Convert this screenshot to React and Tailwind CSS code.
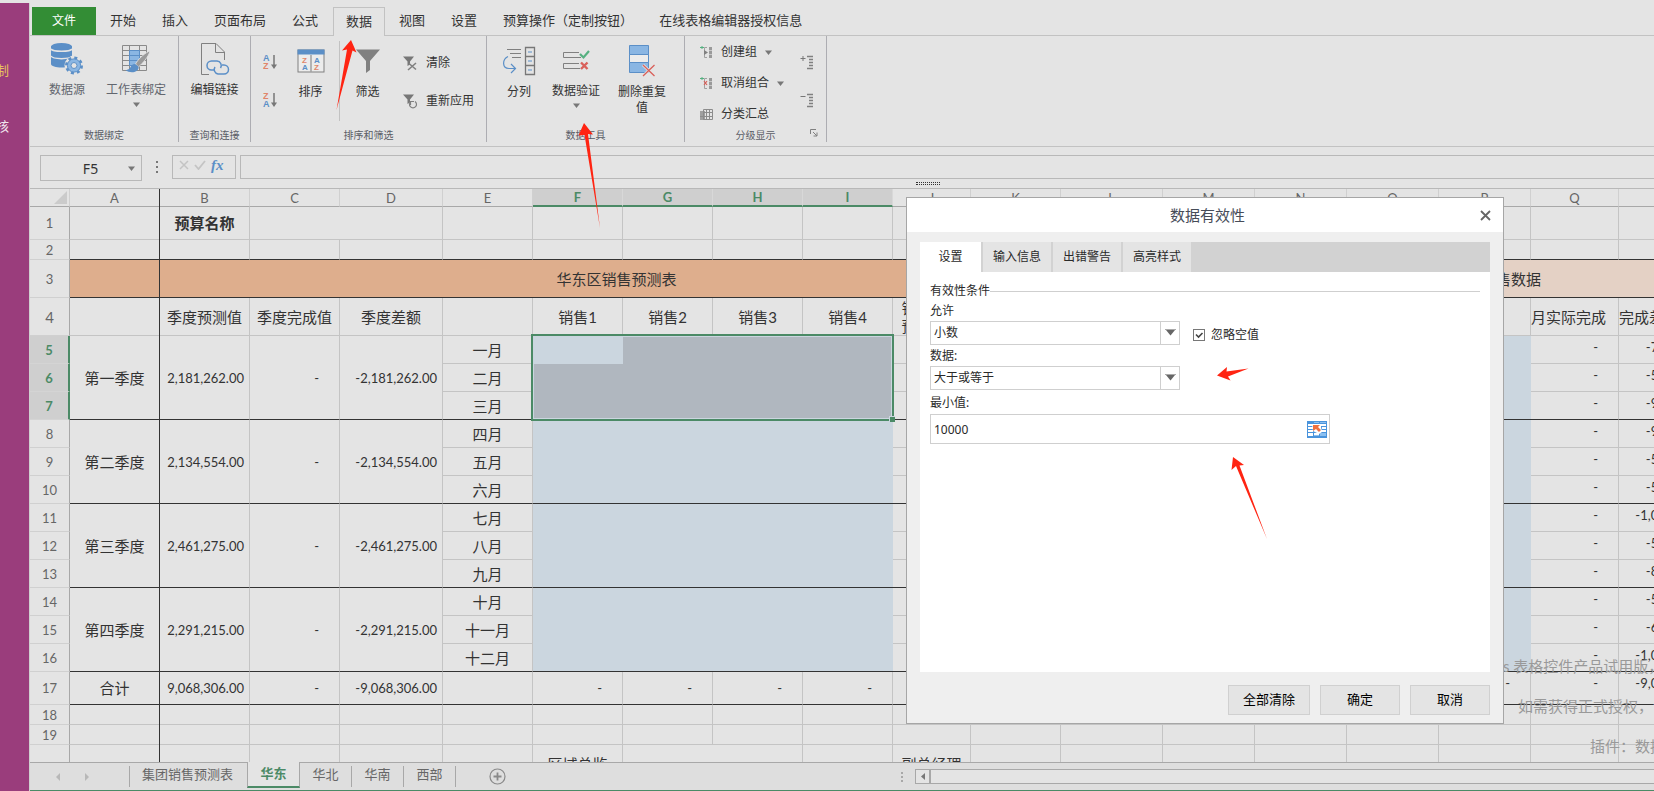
/**
 * Online spreadsheet editor: ribbon, formula bar, sheet grid and sheet tabs,
 * with the data validation dialog open above the grid.
 */
const FONT = "font-['Lato','Noto_Sans_CJK_SC',sans-serif]"
const FONT_UI = "font-['Noto_Sans','Noto_Sans_CJK_SC',sans-serif]"

const MENU = ['开始', '插入', '页面布局', '公式', '数据', '视图', '设置', '预算操作（定制按钮）', '在线表格编辑器授权信息']

const COLUMNS = [
  ['A', 90], ['B', 90], ['C', 90], ['D', 103], ['E', 90], ['F', 90], ['G', 90], ['H', 90], ['I', 90],
  ['J', 78], ['K', 90], ['L', 102], ['M', 92], ['N', 92], ['O', 92], ['P', 92], ['Q', 88], ['R', 107], ['S', 88],
]

const QUARTERS = [
  { name: '第一季度', total: '2,181,262.00', months: ['一月', '二月', '三月'], gaps: ['-711,262.00', '-540,000.00', '-930,000.00'] },
  { name: '第二季度', total: '2,134,554.00', months: ['四月', '五月', '六月'], gaps: ['-984,554.00', '-580,000.00', '-570,000.00'] },
  { name: '第三季度', total: '2,461,275.00', months: ['七月', '八月', '九月'], gaps: ['-1,021,275.00', '-560,000.00', '-880,000.00'] },
  { name: '第四季度', total: '2,291,215.00', months: ['十月', '十一月', '十二月'], gaps: ['-590,000.00', '-630,000.00', '-1,071,215.00'] },
]

const SHEETS = ['集团销售预测表', '华东', '华北', '华南', '西部']

const Caret = ({ className = '' }) => (
  <svg width="7" height="5" viewBox="0 0 7 5" className={className} aria-hidden="true">
    <path d="M0 0.500h7L3.500 5z" fill="#777" />
  </svg>
)

/* ---------- ribbon icons ---------- */

const DataSourceIcon = () => (
  <svg width="34" height="34" viewBox="0 0 34 34" aria-hidden="true">
    <path d="M1 4v18c0 2 5 3.500 10.500 3.500S22 24 22 22V4z" fill="#5b8fc7" />
    <ellipse cx="11.500" cy="4.500" rx="10.500" ry="3.500" fill="#5b8fc7" />
    <path d="M1 7c2 3 19 3 21 0M1 14c2 3.500 19 3.500 21 0" fill="none" stroke="#e4e4e4" strokeWidth="1.500" />
    <circle cx="24" cy="23.500" r="9.500" fill="#e4e4e4" />
    <circle cx="24" cy="23.500" r="7.500" fill="none" stroke="#5b8fc7" strokeWidth="3" strokeDasharray="2.900 3" />
    <circle cx="24" cy="23.500" r="4.800" fill="#e4e4e4" stroke="#8ab6e3" strokeWidth="3.600" />
    <circle cx="24" cy="23.500" r="6.600" fill="none" stroke="#5b8fc7" />
    <circle cx="24" cy="23.500" r="3" fill="#e4e4e4" stroke="#5b8fc7" />
  </svg>
)

const SheetBindIcon = () => (
  <svg width="30" height="32" viewBox="0 0 30 32" aria-hidden="true">
    <path d="M1.500 2.500h24v25h-24zM1.500 7.500h24M1.500 12.500h24M1.500 17.500h24M1.500 22.500h24M8.500 2.500v25M18.500 2.500v25" fill="none" stroke="#8a8a8a" />
    <path d="M8.500 7.500h10v15h-10z" fill="#8ab6e3" stroke="#5b8fc7" />
    <path d="M8.500 12.500h10M8.500 17.500h10" stroke="#5b8fc7" />
    <path d="M29 8c-4 1-12 8-14.500 13l3 3C22 20 28 13 29 8z" fill="#9a9a9a" stroke="#e4e4e4" strokeWidth="0.800" />
    <path d="M14 21c-3 0-4 2-5 4-1 1.500-3 2-4.500 2 3 2.500 8 3 11 1 2-1.500 2.500-3 2-4.500z" fill="#5b8fc7" />
  </svg>
)

const EditLinkIcon = () => (
  <svg width="30" height="34" viewBox="0 0 30 34" aria-hidden="true">
    <path d="M9 32.500H1.500v-31H16l8.500 8.500v8M15.500 1.500v9h9" fill="none" stroke="#808080" />
    <path d="M15 28h-3.500a4.500 4.500 0 0 1 0-9H17a4.500 4.500 0 0 1 3.500 7" fill="none" stroke="#5b8fc7" strokeWidth="1.500" />
    <path d="M22 23h2a4.500 4.500 0 0 1 0 9h-6a4.500 4.500 0 0 1-3-7" fill="none" stroke="#5b8fc7" strokeWidth="1.500" />
  </svg>
)

const SortIcon = ({ desc = false }) => (
  <svg width="16" height="16" viewBox="0 0 16 16" aria-hidden="true" className="font-['Liberation_Sans',sans-serif] text-[9px] font-bold">
    <text x="0" y="7" fill={desc ? '#e0856a' : '#5b8fc7'}>{desc ? 'Z' : 'A'}</text>
    <text x="0" y="15" fill={desc ? '#5b8fc7' : '#e0856a'}>{desc ? 'A' : 'Z'}</text>
    <path d="M11 1v11" stroke="#777" strokeWidth="1.500" />
    <path d="M8 10.500h6L11 15z" fill="#777" />
  </svg>
)

const CustomSortIcon = () => (
  <svg width="28" height="24" viewBox="0 0 28 24" aria-hidden="true" className="font-['Liberation_Sans',sans-serif] text-[8px] font-bold">
    <rect x="1" y="1" width="26" height="22" fill="#ececec" stroke="#808080" />
    <rect x="0.500" y="0.500" width="27" height="5" fill="#5b8fc7" />
    <path d="M14 6v17" stroke="#a0a0a0" strokeWidth="1.500" />
    <text x="5" y="14" fill="#e0856a">Z</text>
    <text x="5" y="21" fill="#5b8fc7">A</text>
    <text x="17" y="14" fill="#5b8fc7">A</text>
    <text x="17" y="21" fill="#e0856a">Z</text>
  </svg>
)

const FilterIcon = () => (
  <svg width="24" height="24" viewBox="0 0 24 24" aria-hidden="true">
    <path d="M0 0.500h24L14 12v9l-4 3V12z" fill="#808080" />
  </svg>
)

const SmallFilterIcon = ({ clear = false }) => (
  <svg width="15" height="15" viewBox="0 0 15 15" aria-hidden="true">
    <path d="M0 0.500h11L7 5.500v3L4.500 10V5.500z" fill="#777" />
    {clear
      ? <path d="M5 14l8-7M6 7.500l7 6" stroke="#808080" strokeWidth="1.600" />
      : <path d="M8 7.500a3.500 3.500 0 1 0 4 0M7.500 11V7.500H11" fill="none" stroke="#808080" strokeWidth="1.200" />}
  </svg>
)

const SplitIcon = () => (
  <svg width="34" height="30" viewBox="0 0 34 30" aria-hidden="true">
    <path d="M5 3.500h14M8 7.500h11M10 11.500h9" stroke="#808080" />
    <path d="M6 10.500c-6 3-6 12 1 12h6M9 18l4.500 4.500L9 27" fill="none" stroke="#5b8fc7" strokeWidth="1.200" />
    <path d="M23.500 1.500h9v27h-9zM23.500 10.500h9M23.500 19.500h9" fill="none" stroke="#777" strokeWidth="1.300" />
    <path d="M26 6h4M26 15h4M26 24h4" stroke="#5b8fc7" strokeWidth="1.200" />
  </svg>
)

const ValidationIcon = () => (
  <svg width="28" height="22" viewBox="0 0 28 22" aria-hidden="true">
    <path d="M17 3.500H1.500v5H19M17 14.500H1.500v5H18" fill="none" stroke="#808080" />
    <path d="M18 5l3.500 3.500L27 2" fill="none" stroke="#55b080" strokeWidth="2.200" />
    <path d="M19 13.500l6.500 6.500M25.500 13.500L19 20" stroke="#d9605a" strokeWidth="2.400" />
  </svg>
)

const DuplicatesIcon = () => (
  <svg width="28" height="34" viewBox="0 0 28 34" aria-hidden="true">
    <path d="M1.500 1.500h19v27h-19z" fill="#8ab6e3" stroke="#5b8fc7" />
    <path d="M1.500 10.500h19v8h-19z" fill="#ececec" stroke="#5b8fc7" />
    <path d="M15 21l11.500 11M26.500 21L15 32" stroke="#e4e4e4" strokeWidth="3" />
    <path d="M15 21l11.500 11M26.500 21L15 32" stroke="#d9605a" strokeWidth="1.300" />
  </svg>
)

const GroupIcon = ({ remove = false }) => (
  <svg width="13" height="13" viewBox="0 0 13 13" aria-hidden="true">
    <path d="M0 1.500h4M2 0v3" stroke="#55b080" />
    <path d="M7 1.500H4.500v10H7" fill="none" stroke="#a0a0a0" />
    <rect x="9" y="1" width="3" height="11" fill="#9a9a9a" />
    <path d="M9 4.500h3M9 8.500h3" stroke="#c8c8c8" />
    {remove
      ? <path d="M4 4l3 4M7 4L4 8" stroke="#d9605a" strokeWidth="1.200" />
      : <path d="M4 4l4 2.500L4 9z" fill="#808080" />}
  </svg>
)

const SubtotalIcon = () => (
  <svg width="13" height="13" viewBox="0 0 13 13" aria-hidden="true">
    <rect x="0" y="3" width="5" height="9" fill="#a0a0a0" />
    <path d="M3.500 1.500h9v10h-9zM3.500 4.500h9M0 8.500h12M6.500 1v11M9.500 1v11" fill="none" stroke="#8c8c8c" />
  </svg>
)

const DetailIcon = ({ hide = false }) => (
  <svg width="15" height="15" viewBox="0 0 15 15" aria-hidden="true">
    <path d={hide ? 'M0.500 3.500h5' : 'M0.500 3.500h5M3 1v5'} stroke="#777" />
    <path d="M7 1.500h6M9 4.500h4M9 7.500h4M9 10.500h4M7 13.500h6" stroke="#808080" strokeWidth="1.300" />
  </svg>
)

/* ---------- ribbon ---------- */

const RibbonGroup = ({ title, className = '', children, launcher }) => (
  <section className={`flex h-[106px] shrink-0 flex-col border-r border-[#adadb2] ${className}`}>
    <div className="flex flex-1">{children}</div>
    <div className="flex h-[14px] items-center justify-center">
      <h2 className="flex-1 text-center text-[10px] leading-[12px] text-[#5a5d66]">{title}</h2>
      {launcher}
    </div>
  </section>
)

const BigButton = ({ icon, label, caret = false, className = '' }) => (
  <button type="button" className={`flex flex-col items-center self-start text-[12px] leading-4 ${className}`}>
    <span className="flex h-[42px] items-center">{icon}</span>
    <span className="mt-[2px]">{label}</span>
    {caret && <Caret className="mt-1" />}
  </button>
)

const SmallButton = ({ icon, label, caret = false, className = '' }) => (
  <button type="button" className={`flex items-center gap-2 text-[12px] leading-4 whitespace-nowrap ${className}`}>
    {icon}
    <span>{label}</span>
    {caret && <Caret />}
  </button>
)

const Ribbon = () => (
  <div className="flex h-[111px] shrink-0 overflow-hidden border-b border-[#c2c2c2] text-[#333]">
    <RibbonGroup title="数据绑定" className="w-[149px]">
      <BigButton className="w-[74px] pt-[2px] text-[#62666e]" icon={<DataSourceIcon />} label="数据源" />
      <BigButton className="w-16 pt-[2px] text-[#62666e]" icon={<SheetBindIcon />} label="工作表绑定" caret />
    </RibbonGroup>
    <RibbonGroup title="查询和连接" className="w-[72px]">
      <BigButton className="w-[72px] pt-[2px]" icon={<EditLinkIcon />} label="编辑链接" />
    </RibbonGroup>
    <RibbonGroup title="排序和筛选" className="w-[236px]">
      <div className="flex flex-col gap-[22px] pt-[18px] pl-3">
        <button type="button" aria-label="升序"><SortIcon /></button>
        <button type="button" aria-label="降序"><SortIcon desc /></button>
      </div>
      <BigButton className="ml-[3px] w-[57px] pt-1" icon={<CustomSortIcon />} label="排序" />
      <div className="mt-[5px] h-20 w-px shrink-0 bg-[#c2c2c2]" />
      <BigButton className="w-[55px] pt-1" icon={<FilterIcon />} label="筛选" />
      <div className="flex flex-col gap-[22px] pt-[19px] pl-2">
        <SmallButton icon={<SmallFilterIcon clear />} label="清除" />
        <SmallButton icon={<SmallFilterIcon />} label="重新应用" />
      </div>
    </RibbonGroup>
    <RibbonGroup title="数据工具" className="w-[198px]">
      <BigButton className="w-[64px] pt-1" icon={<SplitIcon />} label="分列" />
      <BigButton className="w-[50px] pt-[3px]" icon={<ValidationIcon />} label="数据验证" caret />
      <BigButton className="ml-2 w-[66px] px-2 pt-1" icon={<DuplicatesIcon />} label="删除重复值" />
    </RibbonGroup>
    <RibbonGroup
      title="分级显示"
      className="w-[142px]"
      launcher={
        <button type="button" aria-label="分级显示设置" className="-ml-4 pr-2 pb-1">
          <svg width="8" height="8" viewBox="0 0 8 8" aria-hidden="true">
            <path d="M0.500 5V0.500H6M3 3l4 4M7 3.500V7H3.500" fill="none" stroke="#808080" />
          </svg>
        </button>
      }
    >
      <div className="flex w-[108px] flex-col items-start gap-[15px] pt-2 pl-[15px]">
        <SmallButton icon={<GroupIcon />} label="创建组" caret />
        <SmallButton icon={<GroupIcon remove />} label="取消组合" caret />
        <SmallButton icon={<SubtotalIcon />} label="分类汇总" />
      </div>
      <div className="flex flex-col gap-[23px] pt-[19px] pl-[7px]">
        <button type="button" aria-label="显示明细"><DetailIcon /></button>
        <button type="button" aria-label="隐藏明细"><DetailIcon hide /></button>
      </div>
    </RibbonGroup>
  </div>
)

const MenuBar = () => (
  <nav className="flex h-9 shrink-0 items-end border-b border-[#c2c2c2] text-[13px] whitespace-nowrap text-[#333]">
    <button type="button" className="mr-px ml-[2px] h-7 w-16 bg-[#338d35] text-[12px] text-white">文件</button>
    {MENU.map((name) => (
      <button
        key={name}
        type="button"
        className={name === '数据'
          ? 'mr-px -mb-px ml-[2px] h-[29px] border border-b-0 border-[#c2c2c2] bg-[#e4e4e4] px-3'
          : 'h-[29px] px-[13px]'}
      >
        {name}
      </button>
    ))}
  </nav>
)

const FormulaBar = () => (
  <div className="flex h-[42px] shrink-0 items-start border-b border-[#b8b8b8] pt-2 text-[#333]">
    <button type="button" className="ml-[10px] flex h-[26px] w-[102px] items-center border border-[#b8b8b8] text-[14px]">
      <span className="flex-1 text-center">F5</span>
      <Caret className="mr-[6px] -ml-3" />
    </button>
    <span className="flex h-6 w-[30px] flex-col items-center justify-center gap-[3px]">
      <span className="size-[2px] bg-[#777]" />
      <span className="size-[2px] bg-[#777]" />
      <span className="size-[2px] bg-[#777]" />
    </span>
    <div className="flex h-6 w-16 items-center gap-[5px] border border-[#b8b8b8] pb-1 pl-[6px]">
      <button type="button" aria-label="取消输入">
        <svg width="10" height="10" viewBox="0 0 10 10"><path d="M1 1l8 8M9 1L1 9" stroke="#c4c4c4" strokeWidth="1.500" /></svg>
      </button>
      <button type="button" aria-label="确认输入">
        <svg width="12" height="10" viewBox="0 0 12 10"><path d="M1 5l3.500 4L11 1" fill="none" stroke="#c4c4c4" strokeWidth="1.800" /></svg>
      </button>
      <button type="button" className="font-['Liberation_Serif',serif] text-[15px] leading-4 font-bold text-[#5b8fc7] italic">fx</button>
    </div>
    <div className="ml-1 flex-1 border-y border-l border-[#b8b8b8]">
      <input aria-label="编辑栏" className="block h-[22px] w-full bg-transparent px-2 text-[13px] outline-none" />
    </div>
  </div>
)

const Splitter = () => (
  <div className="pointer-events-none absolute top-[182px] left-[916px] flex w-6 flex-col gap-px">
    <span className="border-t border-dotted border-[#333]" />
    <span className="border-t border-dotted border-[#333]" />
  </div>
)

/* ---------- sheet ---------- */

const LINE = 'border-r border-b border-[#c4c4c4]'
const isSelectedColumn = (name) => 'FGHI'.includes(name)

const RowHead = ({ n, height }) => {
  const on = n >= 5 && n <= 7
  return (
    <th
      scope="row"
      style={{ height }}
      className={on
        ? 'border-r-2 border-b border-r-[#4b8a66] border-b-[#d4d4d4] bg-[#cfcfcf] font-bold text-[#4b8a66]'
        : 'border-r border-b border-r-[#a8a8a8] border-b-[#d0d0d0] font-normal text-[#666]'}
    >
      {n}
    </th>
  )
}

const Cells = ({ count, className = LINE }) =>
  Array.from({ length: count }, (_, i) => <td key={i} className={className} />)

const MonthRow = ({ quarter, index, row }) => {
  const last = index === 2
  const under = last ? 'border-b-[#333]' : 'border-b-[#c4c4c4]'
  const merged = 'border-r border-b border-r-[#c4c4c4] border-b-[#333]'
  const cell = `border-r border-b border-r-[#c4c4c4] ${under}`
  const blue = last ? 'border-b border-[#333] bg-[#cbd6df]' : 'bg-[#cbd6df]'
  return (
    <tr>
      <RowHead n={row} height={28} />
      {index === 0 && (
        <>
          <td rowSpan={3} className={`${merged} text-center text-[15px]`}>{quarter.name}</td>
          <td rowSpan={3} className={`${merged} pr-[5px] text-right`}>{quarter.total}</td>
          <td rowSpan={3} className={`${merged} pr-5 text-right`}>-</td>
          <td rowSpan={3} className={`${merged} pr-[5px] text-right`}>-{quarter.total}</td>
        </>
      )}
      <td className={`${cell} text-center text-[15px]`}>{quarter.months[index]}</td>
      {['F', 'G', 'H', 'I'].map((c) => (
        <td key={c} className={row <= 7 && !(row === 5 && c === 'F') ? 'bg-[#b0b7bf]' : blue} />
      ))}
      <Cells count={3} className={cell} />
      <Cells count={4} className={blue} />
      <td className={`${cell} pr-5 text-right align-top leading-[22px]`}>-</td>
      <td className={`${cell} pr-2 text-right align-top leading-[22px]`}>{quarter.gaps[index]}</td>
      <td className={cell} />
    </tr>
  )
}

const Sheet = () => {
  const total = 'border-r border-b border-r-[#c4c4c4] border-b-[#333]'
  return (
    <div className={`relative min-h-0 flex-1 overflow-hidden text-[13px] leading-4 text-[#333] ${FONT}`}>
      <table className="w-[1784px] table-fixed border-separate border-spacing-0">
        <colgroup>
          <col style={{ width: 40 }} />
          {COLUMNS.map(([name, width]) => <col key={name} style={{ width }} />)}
        </colgroup>
        <thead>
          <tr className="h-[18px] text-[#666]">
            <th aria-label="全选" className="border-r border-b border-r-[#d0d0d0] border-b-[#a8a8a8]">
              <svg width="13" height="13" viewBox="0 0 13 13" className="mr-[2px] ml-auto" aria-hidden="true">
                <path d="M13 0v13H0z" fill="#cbcbcb" />
              </svg>
            </th>
            {COLUMNS.map(([name]) => (
              <th
                key={name}
                scope="col"
                className={isSelectedColumn(name)
                  ? 'border-r border-b-2 border-r-[#d8d8d8] border-b-[#4b8a66] bg-[#cfcfcf] font-bold text-[#4b8a66]'
                  : 'border-r border-b border-r-[#d0d0d0] border-b-[#a8a8a8] font-normal'}
              >
                {name}
              </th>
            ))}
          </tr>
        </thead>
        <tbody>
          <tr>
            <RowHead n={1} height={33} />
            <td className={LINE} />
            <td className={`${LINE} text-center text-[15px] font-bold`}>预算名称</td>
            <td colSpan={2} className={LINE} />
            <Cells count={15} />
          </tr>
          <tr>
            <RowHead n={2} height={20} />
            <Cells count={19} className={total} />
          </tr>
          <tr>
            <RowHead n={3} height={38} />
            <td colSpan={12} className="border-b border-[#333] bg-[#deae8d] text-center text-[15px]">华东区销售预测表</td>
            <td colSpan={7} className="border-b border-[#333] bg-[#e4d1c5] text-center text-[15px]">华东区销售数据</td>
          </tr>
          <tr className="text-[15px]">
            <RowHead n={4} height={38} />
            <td className={LINE} />
            <td className={`${LINE} text-center`}>季度预测值</td>
            <td className={`${LINE} text-center`}>季度完成值</td>
            <td className={`${LINE} text-center`}>季度差额</td>
            <td className={LINE} />
            <td className={`${LINE} text-center`}>销售1</td>
            <td className={`${LINE} text-center`}>销售2</td>
            <td className={`${LINE} text-center`}>销售3</td>
            <td className={`${LINE} text-center`}>销售4</td>
            <td className={`${LINE} px-2 text-center leading-[18px]`}>销售金额预测合计</td>
            <Cells count={6} />
            <td className={LINE}>月实际完成</td>
            <td className={LINE}>完成差额</td>
            <td className={LINE} />
          </tr>
          {QUARTERS.map((q, qi) => q.months.map((m, i) => (
            <MonthRow key={m} quarter={q} index={i} row={5 + qi * 3 + i} />
          )))}
          <tr>
            <RowHead n={17} height={33} />
            <td className={`${total} text-center text-[15px]`}>合计</td>
            <td className={`${total} pr-[5px] text-right`}>9,068,306.00</td>
            <td className={`${total} pr-5 text-right`}>-</td>
            <td className={`${total} pr-[5px] text-right`}>-9,068,306.00</td>
            <td className={total} />
            {['F', 'G', 'H', 'I'].map((c) => <td key={c} className={`${total} pr-5 text-right`}>-</td>)}
            <Cells count={6} className={total} />
            <td className={`${total} pr-5 text-right align-top leading-[22px]`}>-</td>
            <td className={`${total} pr-5 text-right align-top leading-[22px]`}>-</td>
            <td className={`${total} pr-2 text-right align-top leading-[22px]`}>-9,068,306.00</td>
            <td className={total} />
          </tr>
          <tr><RowHead n={18} height={20} /><Cells count={19} /></tr>
          <tr><RowHead n={19} height={20} /><Cells count={19} /></tr>
          <tr className="text-[15px]">
            <RowHead n="" height={38} />
            <Cells count={5} />
            <td className={`${LINE} text-center`}>区域总监</td>
            <td colSpan={2} className={LINE} />
            <td className={LINE} />
            <td className={`${LINE} text-center`}>副总经理</td>
            <Cells count={9} />
          </tr>
        </tbody>
      </table>

      {/* frozen column edge */}
      <div className="absolute inset-y-0 left-[129px] w-px bg-[#333]" />

      {/* selection F5:I7 */}
      <div className="absolute top-[145px] left-[501px] h-[87px] w-[363px] border-2 border-[#4b8a66] ring-1 ring-[#cbd6df] ring-inset">
        <span className="absolute -right-[3px] -bottom-[3px] size-[6px] border-t border-l border-[#cbd6df] bg-[#4b8a66]" />
      </div>

      {/* trial notice */}
      <div className="pointer-events-none absolute top-[457px] left-[1473px] text-[15px] leading-[40px] whitespace-nowrap text-[#999]">
        <p>s 表格控件产品试用版，</p>
        <p className="pl-[15px]">如需获得正式授权，请</p>
        <p className="pl-[87px]">插件：数据</p>
      </div>
    </div>
  )
}

const SheetTabs = () => (
  <footer className="flex h-[29px] shrink-0 border-t border-b border-t-[#a8a8a8] border-b-[#4b8a66] bg-[#dedede] text-[13px] leading-4 text-[#666]">
    <div className="flex w-[99px] items-center gap-[25px] pl-[26px]">
      <button type="button" aria-label="上一个"><svg width="4" height="8" viewBox="0 0 4 8"><path d="M4 0v8L0 4z" fill="#b8b8b8" /></svg></button>
      <button type="button" aria-label="下一个"><svg width="4" height="8" viewBox="0 0 4 8"><path d="M0 0v8l4-4z" fill="#b8b8b8" /></svg></button>
    </div>
    {SHEETS.map((name, i) => {
      if (name === '华东') {
        return (
          <button key={name} type="button" className="-mt-px h-[26px] w-[53px] border-x border-b-2 border-x-[#a8a8a8] border-b-[#4b8a66] bg-[#e4e4e4] pb-[2px] font-bold text-[#4b8a66]">
            {name}
          </button>
        )
      }
      return (
        <button
          key={name}
          type="button"
          className={i === 0
            ? 'mt-[3px] h-[21px] w-[118px] border-l border-[#a8a8a8] pr-[2px] pb-[6px]'
            : 'mt-[3px] h-[21px] w-[52px] border-r border-[#a8a8a8] pb-[6px]'}
        >
          {name}
        </button>
      )
    })}
    <button type="button" aria-label="新建工作表" className="ml-[33px] self-center">
      <svg width="17" height="17" viewBox="0 0 17 17">
        <circle cx="8.500" cy="8.500" r="7.500" fill="none" stroke="#8a8a8a" strokeWidth="1.200" />
        <path d="M8.500 4.500v8M4.500 8.500h8" stroke="#8a8a8a" strokeWidth="1.800" />
      </svg>
    </button>
    <div className="ml-[395px] flex flex-col justify-center gap-[2px]">
      <span className="size-[2px] bg-[#a8a8a8]" />
      <span className="size-[2px] bg-[#a8a8a8]" />
      <span className="size-[2px] bg-[#a8a8a8]" />
    </div>
    <div className="mt-[6px] ml-3 flex h-[15px] flex-1 border-y border-l border-[#a8a8a8] bg-[#e4e4e4]">
      <button type="button" aria-label="向左滚动" className="flex w-[15px] items-center justify-center border-r-2 border-[#a8a8a8]">
        <svg width="4" height="7" viewBox="0 0 4 7"><path d="M4 0v7L0 3.500z" fill="#777" /></svg>
      </button>
    </div>
  </footer>
)

/* ---------- data validation dialog ---------- */

const SelectBox = ({ id, label, value }) => (
  <div>
    <label htmlFor={id} className="block leading-5">{label}</label>
    <div className="relative flex h-6 w-[250px]">
      <select id={id} className="w-full appearance-none border border-[#cfcfcf] bg-white px-[3px] outline-none" defaultValue={value}>
        <option>{value}</option>
      </select>
      <span className="pointer-events-none absolute inset-y-0 right-0 flex w-5 items-center justify-center border-l border-[#cfcfcf] pb-[2px]">
        <svg width="11" height="7" viewBox="0 0 11 7" aria-hidden="true">
          <path d="M0 0.500h11" stroke="#aaa" />
          <path d="M1 1h9L5.500 6.500z" fill="#666" />
        </svg>
      </span>
    </div>
  </div>
)

const RangePickIcon = () => (
  <svg width="20" height="17" viewBox="0 0 20 17" aria-hidden="true">
    <rect width="20" height="17" fill="#4a94dc" />
    <path d="M1 3h5v2H1zM1 6h5v2H1zM1 9h5v2H1zM1 12h5v3H1zM7 12h5v2H7zM14 3h5v2h-5zM15 6h4v2h-4zM14 9h5v2h-5z" fill="#fff" />
    <path d="M13 12h6v3h-6zM7 14h5v1H7zM7 1h5v1H7zM13 1h6v1h-6z" fill="#8cc0f0" />
    <path d="M5 3h9v3l1 5-3 2-6-3z" fill="#fff" />
    <path d="M6 4h7l-2 2 3 3-2 2-3-3-3 2z" fill="#f0703f" />
  </svg>
)

const ValidationDialog = () => (
  <div
    role="dialog"
    aria-labelledby="dv-title"
    className="absolute top-[197px] left-[906px] flex h-[527px] w-[598px] flex-col border border-[#a6a6a6] bg-[#efefef] text-[12px] text-[#2a2a2a]"
  >
    <header className="flex h-[34px] shrink-0 items-center bg-white">
      <h1 id="dv-title" className="flex-1 pl-7 text-center text-[15px] text-[#464c58]">数据有效性</h1>
      <button type="button" aria-label="关闭" className="mr-3">
        <svg width="11" height="11" viewBox="0 0 11 11"><path d="M1 1l9 9M10 1l-9 9" stroke="#666" strokeWidth="1.800" /></svg>
      </button>
    </header>

    <div className="mx-[13px] mt-[10px] flex flex-1 flex-col bg-white">
      <div role="tablist" className="flex h-[30px] gap-[2px] bg-[#d2d2d2]">
        <button role="tab" type="button" aria-selected="true" className="w-[61px] bg-white">设置</button>
        <button role="tab" type="button" aria-selected="false" className="w-[68px] bg-[#e4e4e4]">输入信息</button>
        <button role="tab" type="button" aria-selected="false" className="w-[68px] bg-[#e4e4e4]">出错警告</button>
        <button role="tab" type="button" aria-selected="false" className="w-[68px] bg-[#e4e4e4]">高亮样式</button>
      </div>

      <div className="px-[10px] pt-[9px]">
        <div className="flex items-center">
          <h2 className="leading-5">有效性条件</h2>
          <span className="h-px flex-1 bg-[#cfcfcf]" />
        </div>
        <div className="flex items-end gap-[13px] pb-px">
          <SelectBox id="dv-allow" label="允许" value="小数" />
          <label className="flex items-center gap-[6px] leading-5">
            <input type="checkbox" defaultChecked className="peer sr-only" />
            <svg width="12" height="12" viewBox="0 0 12 12" aria-hidden="true">
              <rect x="0.500" y="0.500" width="11" height="11" fill="#fff" stroke="#777" />
              <path d="M3 5.500l2.500 2.500L9.500 4" fill="none" stroke="#444" strokeWidth="1.600" />
            </svg>
            忽略空值
          </label>
        </div>
        <SelectBox id="dv-data" label="数据:" value="大于或等于" />
        <label htmlFor="dv-min" className="mt-[3px] block leading-5">最小值:</label>
        <div className="mt-px flex h-[30px] w-[400px] items-center border border-[#cfcfcf] pr-[2px]">
          <input id="dv-min" defaultValue="10000" className="h-full min-w-0 flex-1 px-[3px] outline-none" />
          <button type="button" aria-label="选择区域"><RangePickIcon /></button>
        </div>
      </div>
    </div>

    <div className="flex justify-end gap-[10px] px-[13px] pt-[13px] pb-2 text-[13px] text-black">
      <button type="button" className="h-[30px] w-[82px] border border-[#d0d0d0] bg-[#e4e4e4]">全部清除</button>
      <button type="button" className="h-[30px] w-20 border border-[#d0d0d0] bg-[#e4e4e4]">确定</button>
      <button type="button" className="h-[30px] w-20 border border-[#d0d0d0] bg-[#e4e4e4]">取消</button>
    </div>
  </div>
)

/* red pointers drawn over the steps to follow */
const Pointers = () => (
  <svg className="pointer-events-none absolute inset-0 h-full w-full" fill="#ff2412" aria-hidden="true">
    <path d="M351 40l5.500 12.500-4-2L336.500 110 347 49.500l-5 1z" />
    <path d="M584 123l9 11.500-5-.5 12 94-15.500-93-6 .5z" />
    <path d="M1217 375.500l10-8.500-.5 4.500 22-3-20.500 8 2.500 4z" />
    <path d="M1233 457l11 8-4.500.5 27.500 73.500-31-73-4.500 4z" />
  </svg>
)

const App = () => (
  <div className={`relative flex h-screen min-h-[600px] overflow-hidden bg-[#e4e4e4] ${FONT_UI}`}>
    <aside className="mt-[3px] w-[30px] shrink-0 border-r border-[#cfcfcf] bg-[#9a3d7c] text-[13px]">
      <div className="flex w-[9px] flex-col items-end gap-[36px] overflow-hidden pt-[57px] leading-5">
        <span className="text-[#e8c35c]">制</span>
        <span className="text-[#f0e6ee]">核</span>
      </div>
    </aside>
    <main className="flex min-w-0 flex-1 flex-col">
      <MenuBar />
      <Ribbon />
      <FormulaBar />
      <Sheet />
      <SheetTabs />
    </main>
    <Splitter />
    <ValidationDialog />
    <Pointers />
  </div>
)

export default App
